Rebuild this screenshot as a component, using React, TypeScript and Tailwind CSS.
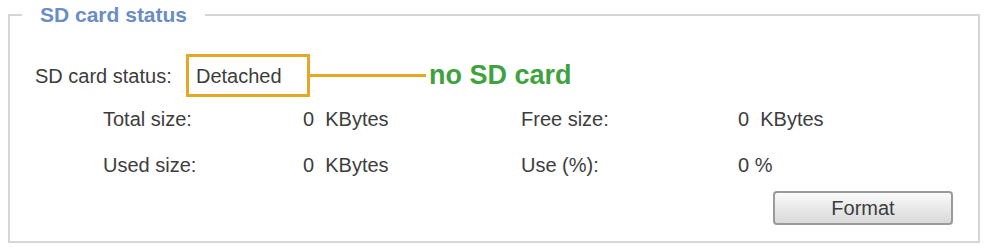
import React from "react";

export default function App() {
  const font = { fontFamily: '"Liberation Sans", Arial, sans-serif' };
  return (
    <div className="w-[987px] h-[248px] bg-white text-[#3d3d3d]" style={font}>
      <fieldset className="ml-[8px] mr-[7px] mt-[2px] h-[241px] border-2 border-[#d6d6d6] px-0 flex flex-col">
        <legend className="ml-[12px] px-[18px] text-[21px] font-bold text-[#6a8dc3] leading-[26px]">
          SD card status
        </legend>
        <div className="flex items-center mt-[26px] pl-[25px] text-[20px] h-[43px]">
          <span className="w-[151px]">SD card status:</span>
          <div className="h-[43px] w-[124px] border-[3px] border-[#e6a824] flex items-center pl-[7px]">
            Detached
          </div>
          <div className="w-[116px] h-[3px] bg-[#e6a824]" />
          <span className="ml-[3px] text-[27px] font-bold text-[#3ea33e] leading-none">no SD card</span>
        </div>
        <div className="grid grid-cols-[200px_218px_217px_1fr] pl-[93px] text-[20px] mt-[2px]">
          <div className="h-[40px] flex items-center">Total size:</div>
          <div className="h-[40px] flex items-center">0&nbsp;&nbsp;KBytes</div>
          <div className="h-[40px] flex items-center">Free size:</div>
          <div className="h-[40px] flex items-center">0&nbsp;&nbsp;KBytes</div>
          <div className="h-[46px] flex items-center pt-[6px]">Used size:</div>
          <div className="h-[46px] flex items-center pt-[6px]">0&nbsp;&nbsp;KBytes</div>
          <div className="h-[46px] flex items-center pt-[6px]">Use (%):</div>
          <div className="h-[46px] flex items-center pt-[6px]">0 %</div>
        </div>
        <div className="flex justify-end pr-[25px] mt-[6px]">
          <button className="w-[180px] h-[34px] rounded-[4px] border-2 border-[#9a9a9a] bg-gradient-to-b from-[#fafafa] to-[#d9d9d9] text-[20px] text-[#3d3d3d]">
            Format
          </button>
        </div>
      </fieldset>
    </div>
  );
}
